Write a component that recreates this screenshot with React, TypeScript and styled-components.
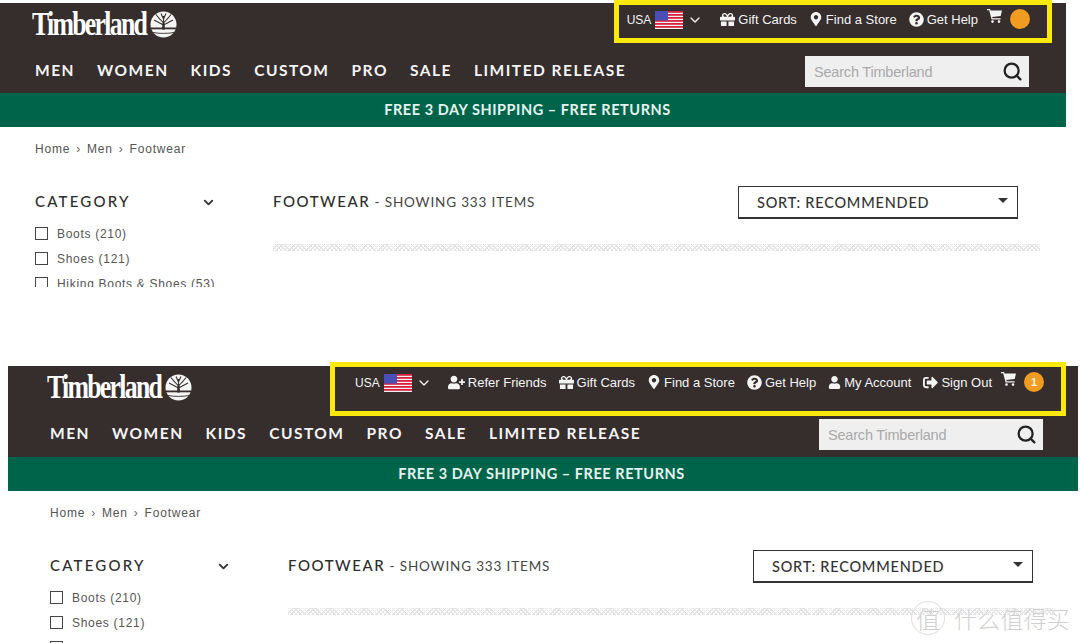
import React, { FunctionComponent } from 'react';
import styled, { createGlobalStyle } from 'styled-components';
import { FaGift, FaMapMarkerAlt, FaQuestionCircle, FaSignOutAlt, FaUser, FaUserPlus } from 'react-icons/fa';
import { ChevronDown, Search } from 'lucide-react';

const NAV_ITEMS = ['MEN', 'WOMEN', 'KIDS', 'CUSTOM', 'PRO', 'SALE', 'LIMITED RELEASE'];

interface IShotConfig {
  left: number;
  width: number;
  top: number;
  height: number;
  inset: number;
  navHeight: number;
  box: { lift: number; height: number; right: number; padding: number };
  searchRight: number;
  bannerShift: number;
  signedIn: boolean;
}

const SHOTS: IShotConfig[] = [
  {
    left: 0,
    width: 1066,
    top: 3,
    height: 366,
    inset: 35,
    navHeight: 47,
    box: { lift: 3, height: 43, right: 14, padding: 8 },
    searchRight: 37,
    bannerShift: 11,
    signedIn: false,
  },
  {
    left: 8,
    width: 1070,
    top: 0,
    height: 277,
    inset: 42,
    navHeight: 48,
    box: { lift: 4, height: 54, right: 12, padding: 20 },
    searchRight: 35,
    bannerShift: 3,
    signedIn: true,
  },
];

const GlobalStyle = createGlobalStyle`
  html, body {
    margin: 0;
    background: #fff;
  }
`;

const Flag: FunctionComponent = () => (
  <FlagSvg viewBox="0 0 28 18">
    <rect width="28" height="18" fill="#f4f0f2" />
    {[0, 3, 6, 9, 12, 15].map((y) => (
      <rect key={y} y={y} width="28" height="1.8" fill="#d8233f" />
    ))}
    <rect width="13" height="9.5" fill="#4a4fb5" />
  </FlagSvg>
);

const TreeMark: FunctionComponent = () => (
  <svg width="27" height="27" viewBox="0 0 27 27">
    <circle cx="13.5" cy="13.5" r="13" fill="#f5f5f5" />
    <path
      d="M13.500 17V5M13.500 12 8 6M13.500 12l5.500-6M13.500 14 4 9M13.500 14 23 9M10 8.500 6 3.500M17 8.500l4-5M13.500 8 11 2.500M13.500 8 16 2.500"
      stroke="#362d2d"
      strokeWidth="1.1"
      fill="none"
    />
    <path d="M1 16.500h25v1.800H1z" fill="#362d2d" />
    <path d="M12 18.500h3l-.5-7h-2z" fill="#362d2d" />
    <path d="M3 21.500c6 1.200 15 1.200 21 0" stroke="#362d2d" strokeWidth="0.9" fill="none" />
  </svg>
);

const CartIcon: FunctionComponent = () => (
  <svg width="15" height="14" viewBox="0 0 15 14" fill="currentColor">
    <path d="M0 0h3l.6 1.600H15l-1.300 5.400-8.500 1 .4 1.300h8v1.200H4.600L2.200 1.200H0z" />
    <circle cx="5.500" cy="12.600" r="1.300" />
    <circle cx="12" cy="12.600" r="1.300" />
  </svg>
);

const Shot: FunctionComponent<{ config: IShotConfig }> = ({ config }) => {
  const { box, signedIn } = config;

  return (
    <ShotFrame $left={config.left} $width={config.width} $top={config.top} $height={config.height}>
      <Header>
        <TopRow $inset={config.inset - 3}>
          <Logo>
            <LogoWord>Timberland</LogoWord>
            <TreeMark />
          </Logo>
          <UtilityBox $lift={box.lift} $height={box.height} $right={box.right} $padding={box.padding}>
            <Locale>
              USA
              <Flag />
              <ChevronDown size={16} strokeWidth={2} />
            </Locale>
            <UtilityLinks $signedIn={signedIn}>
              {signedIn && (
                <UtilityLink>
                  <FaUserPlus size={17} />
                  Refer Friends
                </UtilityLink>
              )}
              <UtilityLink>
                <FaGift size={15} />
                Gift Cards
              </UtilityLink>
              <UtilityLink>
                <FaMapMarkerAlt size={14} />
                Find a Store
              </UtilityLink>
              <UtilityLink>
                <FaQuestionCircle size={15} />
                Get Help
              </UtilityLink>
              {signedIn && (
                <UtilityLink>
                  <FaUser size={13} />
                  My Account
                </UtilityLink>
              )}
              {signedIn && (
                <UtilityLink>
                  <FaSignOutAlt size={15} />
                  Sign Out
                </UtilityLink>
              )}
            </UtilityLinks>
            <Cart>
              <CartIcon />
              <CartCount>{signedIn ? '1' : ''}</CartCount>
            </Cart>
          </UtilityBox>
        </TopRow>
        <NavRow $height={config.navHeight} $inset={config.inset} $right={config.searchRight}>
          <Nav>
            {NAV_ITEMS.map((item) => (
              <NavLink key={item}>{item}</NavLink>
            ))}
          </Nav>
          <SearchBox>
            <SearchHint>Search Timberland</SearchHint>
            <Search size={21} strokeWidth={2.6} color="#222" />
          </SearchBox>
        </NavRow>
      </Header>
      <Banner $shift={config.bannerShift}>FREE 3 DAY SHIPPING – FREE RETURNS</Banner>
      <Content $inset={config.inset}>
        <Crumbs>
          Home
          <CrumbSep>›</CrumbSep>
          Men
          <CrumbSep>›</CrumbSep>
          Footwear
        </Crumbs>
        <Columns>
          <Sidebar>
            <FilterHead>
              CATEGORY
              <ChevronDown size={15} strokeWidth={3} />
            </FilterHead>
            <FilterRow>
              <Check />
              Boots (210)
            </FilterRow>
            <FilterRow>
              <Check />
              Shoes (121)
            </FilterRow>
            <FilterRow>
              <Check />
              Hiking Boots &amp; Shoes (53)
            </FilterRow>
          </Sidebar>
          <Main>
            <MainHead>
              <Title>
                <strong>FOOTWEAR</strong> - SHOWING 333 ITEMS
              </Title>
              <SortBox>
                SORT: RECOMMENDED
                <Caret />
              </SortBox>
            </MainHead>
            <Hatch />
          </Main>
        </Columns>
      </Content>
    </ShotFrame>
  );
};

export const App: FunctionComponent = () => (
  <Page>
    <GlobalStyle />
    {SHOTS.map((config) => (
      <Shot key={config.left} config={config} />
    ))}
    <Watermark>
      <WatermarkBadge>值</WatermarkBadge>
      什么值得买
    </Watermark>
  </Page>
);

const Page = styled.div`
  position: relative;
  width: 1080px;
  height: 643px;
  overflow: hidden;
  font-family: 'Liberation Sans', Arial, sans-serif;
`;

const ShotFrame = styled.section<{ $left: number; $width: number; $top: number; $height: number }>`
  box-sizing: border-box;
  margin-left: ${(p) => p.$left}px;
  width: ${(p) => p.$width}px;
  height: ${(p) => p.$height}px;
  padding-top: ${(p) => p.$top}px;
`;

const Header = styled.header`
  background: #362d2d;
  color: #f4f4f4;
`;

const TopRow = styled.div<{ $inset: number }>`
  display: flex;
  justify-content: space-between;
  align-items: flex-start;
  height: 43px;
  padding-left: ${(p) => p.$inset}px;
`;

const Logo = styled.div`
  display: flex;
  align-items: center;
  gap: 4px;
  height: 28px;
  margin-top: 7px;
`;

const LogoWord = styled.span`
  display: inline-block;
  width: 114px;
  font-family: 'Liberation Serif', serif;
  font-size: 34px;
  font-weight: 700;
  letter-spacing: -2.3px;
  color: #fff;
  white-space: nowrap;
  transform: scaleX(0.76);
  transform-origin: left center;
`;

const UtilityBox = styled.div<{ $lift: number; $height: number; $right: number; $padding: number }>`
  box-sizing: border-box;
  display: flex;
  align-items: flex-start;
  height: ${(p) => p.$height}px;
  margin-top: -${(p) => p.$lift}px;
  margin-right: ${(p) => p.$right}px;
  padding: ${(p) => p.$lift + 1}px 17px 0 ${(p) => p.$padding}px;
  border: 5px solid #fbe80c;
  font-size: 13px;
`;

const Locale = styled.div`
  display: flex;
  align-items: center;
  gap: 4px;
  height: 22px;
  font-size: 12px;
`;

const FlagSvg = styled.svg`
  width: 28px;
  height: 18px;
`;

const UtilityLinks = styled.div<{ $signedIn: boolean }>`
  display: flex;
  gap: 12px;
  margin-left: ${(p) => (p.$signedIn ? 16 : 17)}px;
`;

const UtilityLink = styled.span`
  display: flex;
  align-items: center;
  gap: 3px;
  height: 20px;
  white-space: nowrap;
`;

const Cart = styled.div`
  display: flex;
  align-items: flex-start;
  gap: 8px;
  margin-left: 9px;
`;

const CartCount = styled.span`
  display: flex;
  align-items: center;
  justify-content: center;
  width: 20px;
  height: 20px;
  border-radius: 50%;
  background: #f09c20;
  font-size: 11px;
  font-weight: 700;
  color: #f7f1e2;
`;

const NavRow = styled.div<{ $height: number; $inset: number; $right: number }>`
  display: flex;
  justify-content: space-between;
  align-items: flex-start;
  height: ${(p) => p.$height}px;
  padding-left: ${(p) => p.$inset}px;
  padding-right: ${(p) => p.$right}px;
`;

const Nav = styled.nav`
  display: flex;
  gap: 22px;
  padding-top: 15px;
`;

const NavLink = styled.span`
  font-family: Lato, sans-serif;
  font-size: 15.5px;
  font-weight: 700;
  letter-spacing: 1.5px;
  line-height: 19px;
  white-space: nowrap;
`;

const SearchBox = styled.div`
  box-sizing: border-box;
  display: flex;
  align-items: center;
  justify-content: space-between;
  width: 224px;
  height: 31px;
  margin-top: 10px;
  padding: 0 6px 0 9px;
  background: #efefef;
`;

const SearchHint = styled.span`
  font-size: 14.5px;
  letter-spacing: -0.2px;
  color: #a9a9a9;
`;

const Banner = styled.div<{ $shift: number }>`
  box-sizing: border-box;
  height: 34px;
  padding-right: ${(p) => p.$shift}px;
  background: #00644a;
  font-family: Lato, sans-serif;
  font-size: 14.5px;
  font-weight: 700;
  letter-spacing: 0.55px;
  line-height: 33px;
  text-align: center;
  color: #e4f3ee;
`;

const Content = styled.div<{ $inset: number }>`
  padding-left: ${(p) => p.$inset}px;
`;

const Crumbs = styled.div`
  display: flex;
  gap: 6px;
  padding-top: 15px;
  font-size: 12px;
  letter-spacing: 0.8px;
  line-height: 14px;
  color: #555;
`;

const CrumbSep = styled.span`
  color: #666;
`;

const Columns = styled.div`
  display: flex;
  margin-top: 35px;
`;

const Sidebar = styled.aside`
  box-sizing: border-box;
  width: 181px;
  height: 96px;
  margin-right: 57px;
  overflow: hidden;
`;

const FilterHead = styled.div`
  display: flex;
  justify-content: space-between;
  align-items: center;
  height: 20px;
  margin-bottom: 10px;
  font-family: Lato, sans-serif;
  font-size: 15px;
  font-weight: 500;
  letter-spacing: 2.2px;
  color: #2d2d2d;

  svg {
    margin-top: 2px;
    color: #333;
  }
`;

const FilterRow = styled.div`
  display: flex;
  align-items: center;
  gap: 9px;
  height: 25px;
  font-size: 12px;
  letter-spacing: 0.7px;
  white-space: nowrap;
  color: #555;
`;

const Check = styled.span`
  flex: none;
  box-sizing: border-box;
  width: 13px;
  height: 13px;
  border: 1px solid #444;
`;

const Main = styled.main`
  width: 767px;
`;

const MainHead = styled.div`
  display: flex;
  justify-content: space-between;
  align-items: flex-start;
  padding-right: 22px;
`;

const Title = styled.h1`
  margin: 0;
  font-family: Lato, sans-serif;
  font-size: 13.5px;
  font-weight: 400;
  letter-spacing: 0.85px;
  line-height: 20px;
  color: #444;

  strong {
    font-size: 15px;
    font-weight: 500;
    letter-spacing: 1.55px;
    color: #2d2d2d;
  }
`;

const SortBox = styled.div`
  box-sizing: border-box;
  display: flex;
  justify-content: space-between;
  align-items: center;
  width: 280px;
  height: 33px;
  margin-top: -5px;
  padding: 0 9px 0 18px;
  border: 1px solid #333;
  border-bottom-width: 2px;
  font-family: Lato, sans-serif;
  font-size: 14.5px;
  font-weight: 500;
  letter-spacing: 0.8px;
  color: #333;
`;

const Caret = styled.span`
  width: 0;
  height: 0;
  margin-top: -3px;
  border-left: 5.5px solid transparent;
  border-right: 5.5px solid transparent;
  border-top: 5px solid #333;
`;

const Hatch = styled.div`
  height: 7px;
  margin-top: 25px;
  background:
    repeating-linear-gradient(45deg, #e4e4e4 0 1px, transparent 1px 3px),
    repeating-linear-gradient(-45deg, #e4e4e4 0 1px, transparent 1px 3px);
`;

const Watermark = styled.div`
  position: absolute;
  right: 10px;
  bottom: 8px;
  display: flex;
  align-items: center;
  gap: 9px;
  font-family: 'Noto Sans CJK SC', sans-serif;
  font-size: 23px;
  font-weight: 300;
  letter-spacing: 0.2px;
  color: #cfcfcf;
  text-shadow: 0 0 2px #fff;
`;

const WatermarkBadge = styled.span`
  display: flex;
  align-items: center;
  justify-content: center;
  width: 32px;
  height: 32px;
  border: 1px solid #ddd;
  border-radius: 50%;
  font-size: 24px;
`;

export default App;
